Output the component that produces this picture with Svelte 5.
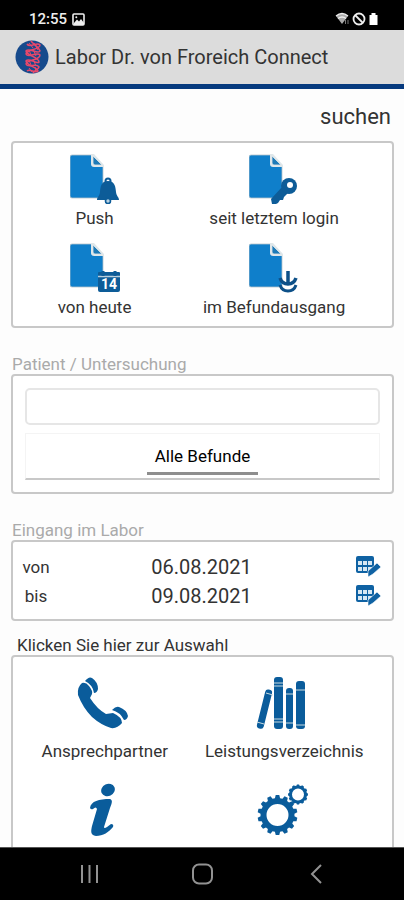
<!--
  Search screen of the lab results app
  Status bar, app header, search panels and the system navigation bar
-->
<script lang="ts">
  const filters = [
    { id: 'push', label: 'Push' },
    { id: 'login', label: 'seit letztem login' },
    { id: 'today', label: 'von heute' },
    { id: 'outbox', label: 'im Befundausgang' },
  ];

  const dates = $state([
    { id: 'from', label: 'von', value: '06.08.2021' },
    { id: 'to', label: 'bis', value: '09.08.2021' },
  ]);

  // Links without a label show only their icon
  const links = [
    { id: 'phone', label: 'Ansprechpartner' },
    { id: 'books', label: 'Leistungsverzeichnis' },
    { id: 'info', label: '' },
    { id: 'gears', label: '' },
  ];

  let query = $state('');

  /**
   * Outline of a gear wheel with a round hole
   */
  function gear(cx: number, cy: number, outer: number, root: number, hole: number, teeth: number): string {
    const points: string[] = [];
    const step = (Math.PI * 2) / teeth;
    const corners = [[-0.34, root], [-0.2, outer], [0.2, outer], [0.34, root]];
    for (let i = 0; i < teeth; i++) {
      for (const [offset, radius] of corners) {
        const angle = (i + offset) * step - Math.PI / 2;
        points.push(`${(cx + radius * Math.cos(angle)).toFixed(2)} ${(cy + radius * Math.sin(angle)).toFixed(2)}`);
      }
    }
    return `M${points.join('L')}ZM${cx - hole} ${cy}a${hole} ${hole} 0 1 0 ${hole * 2} 0a${hole} ${hole} 0 1 0 ${-hole * 2} 0Z`;
  }
</script>

<div class="screen">
  <div class="status-bar">
    <span class="clock">12:55</span>
    <svg width="13" height="13" viewBox="0 0 13 13" aria-hidden="true">
      <rect x="1" y="1" width="11" height="11" rx="1" fill="none" stroke="#eee" stroke-width="1.6" />
      <path d="M2 10 5 6.500l2 2L9 6l3 4v2H2z" fill="#eee" />
      <circle cx="4.300" cy="4.200" r="1" fill="#eee" />
    </svg>
    <svg class="signals" width="44" height="14" viewBox="0 0 44 14" aria-hidden="true">
      <path d="M1 4Q7 -1 13 4L7 12z" fill="#aaa" />
      <path d="M1 4Q7 -1 13 4M3 6.500Q7 3.500 11 6.500" fill="none" stroke="#eee" stroke-width="1.400" />
      <path d="M10.500 12V8M13 8v4" stroke="#777" />
      <circle cx="24" cy="7" r="5.500" fill="none" stroke="#eee" stroke-width="1.800" />
      <path d="m20 3 8 8" stroke="#eee" stroke-width="1.800" />
      <path d="M34.500 3h2V1h4v2h2v10h-8z" fill="#fff" />
    </svg>
  </div>

  <header class="app-header">
    <svg width="34" height="34" viewBox="0 0 34 34" aria-hidden="true">
      <circle cx="17" cy="17" r="16.500" fill="#164a8c" />
      <g fill="none" stroke="#e8486a" stroke-width="1.500">
        <path d="M12 4C15 9 22 1 25 5C25 10 12 9 11 14C13 19 22 11 25 15C25 21 12 19 11 24C13 29 21 22 24 27C23 30 20 30 18 33" />
        <path d="M16 1C18 4 24 7 25 11C23 15 14 7 11 11C12 16 24 17 24 22C22 25 14 17 11 21C12 26 22 27 23 31C20 34 15 28 12 31" />
        <path d="m14 3 4 5M19 3l4 7M14 10l2 5M18 9l3 7M14 20l2 5M18 19l3 7M14 28l3 4M20 27l1 4" stroke-width="1" />
      </g>
    </svg>
    <h1>Labor Dr. von Froreich Connect</h1>
  </header>

  <main>
    <button class="search" type="button">suchen</button>

    <section class="panel filters" aria-label="Filter">
      {#each filters as filter (filter.id)}
        <button class="tile" type="button">
          <svg width="50" height="50" viewBox="0 0 50 50" aria-hidden="true">
            <path d="M2 1H23L33 12V43Q33 44 32 44H2Q0 44 0 42V3Q0 1 2 1Z" fill="#0f7fcb" stroke="#b5c3ca" stroke-width="0.800" />
            <path d="M21 0 34 0V13H24Q21 13 21 10Z" fill="#dfe7ea" />
            <path d="M24 0 34 0V11Z" fill="#fff" />
            <path d="M23 2V9Q23 11 25 11H32Z" fill="#1e7bb8" stroke="#dfe7ea" stroke-width="0.800" />
            {#if filter.id === 'push'}
              <circle cx="38" cy="27" r="2.500" fill="none" stroke="#0d5c98" stroke-width="2" />
              <path d="M38 27C31 27 30.500 33 30 38C29.700 42 27 43 27 46H49C49 43 46.300 42 46 38C45.500 33 45 27 38 27Z" fill="#0d5c98" />
              <circle cx="38" cy="47" r="2.500" fill="#b9d2e2" stroke="#0d5c98" stroke-width="1.600" />
            {:else if filter.id === 'login'}
              <path d="m33 33 6 6-4 4-1 3-3 0-2 3-2 1-4 0-1-5z" fill="#0d5c98" />
              <circle cx="40" cy="32" r="8" fill="#0d5c98" />
              <circle cx="41" cy="31" r="3" fill="#fff" />
            {:else if filter.id === 'today'}
              <path d="M28 30Q28 29 29 29H49Q50 29 50 30V47Q50 49 48 49H30Q28 49 28 47Z" fill="#0d5c98" />
              <path d="M28 33.500H50" stroke="#b9cfdd" stroke-width="1.500" />
              <path d="M33 28v5M45 28v5" stroke="#0d5c98" stroke-width="3" />
              <text x="39" y="46" text-anchor="middle">14</text>
            {:else}
              <path d="M39 28V41M31 35Q33 41 39 41Q45 41 47 35" fill="none" stroke="#0d5088" stroke-width="3.500" />
              <path d="M31 42Q33 48 39 48Q45 48 47 42" fill="none" stroke="#0d5088" stroke-width="3" />
            {/if}
          </svg>
          <span>{filter.label}</span>
        </button>
      {/each}
    </section>

    <label class="caption" for="query">Patient / Untersuchung</label>
    <section class="panel patient">
      <input id="query" type="text" bind:value={query} />
      <div class="tabs">
        <button class="tab" type="button">Alle Befunde</button>
      </div>
    </section>

    <h2 class="caption">Eingang im Labor</h2>
    <section class="panel dates">
      {#each dates as date (date.id)}
        <div class="date-row">
          <label for={date.id}>{date.label}</label>
          <input id={date.id} type="text" bind:value={date.value} />
          <button type="button" aria-label="Datum {date.label} wählen">
            <svg width="26" height="22" viewBox="0 0 26 22" aria-hidden="true">
              <rect x="1" y="0" width="18" height="17" rx="2" fill="#0f62a3" />
              <path d="M3 5h4v4H3zM8 5h4v4H8zM13 5h4v4h-4zM3 11h4v4H3zM8 11h4v4H8zM13 11h4v4h-4z" fill="#d8e8f3" />
              <path d="m22 7 4 4-8 7-5 3 0-6z" fill="#0f62a3" stroke="#fff" stroke-width="0.600" />
            </svg>
          </button>
        </div>
      {/each}
    </section>

    <h2 class="caption selection">Klicken Sie hier zur Auswahl</h2>
    <nav class="panel links">
      {#each links as link (link.id)}
        <a class="tile" href="#{link.id}" aria-label={link.label || link.id}>
          <svg width="56" height="56" viewBox="0 0 56 56" fill="#0a5c9b" aria-hidden="true">
            {#if link.id === 'phone'}
              <path d="M5 8Q9 7 12 11Q16 16 15 19L13 23Q20 34 29 39L36 38Q45 42 45 48Q40 54 34 53Q24 50 15 42Q6 33 1 20Q0 12 5 8Z" />
              <path d="M8 6Q12 1 15 3Q21 7 21 14Q20 18 17 18Q16 10 8 6Z" />
              <path d="M35 35Q39 31 42 32Q50 35 51 41Q50 45 47 45Q43 37 35 35Z" />
            {:else if link.id === 'books'}
              <rect x="18" y="2" width="9" height="52" rx="3" />
              <rect x="30" y="13" width="7" height="41" rx="3" />
              <rect x="40" y="6" width="9" height="48" rx="3" />
              <rect x="5" y="14" width="7" height="40" rx="3" transform="rotate(14 8 34)" />
              <path d="M18 8h9M18 11h9M18 44h9M18 47h9M30 19h7M30 48h7M40 15h9M40 50h9M10 18l7 2M1 47l7 2" stroke="#c9dbe0" />
            {:else if link.id === 'info'}
              <ellipse cx="31" cy="8" rx="7" ry="6" transform="rotate(-25 31 8)" />
              <path d="M13 26C14 19 22 17 33 17C36 18 35 21 33 26L27 45Q27 47 30 45L34 42Q37 42 36 45C32 50 26 54 19 54C13 53 14 49 15 44L20 27Q19 24 16 27Q14 28 13 26Z" />
            {:else}
              <path d={gear(21.5, 33, 20, 17, 11, 14)} fill-rule="evenodd" />
              <path d={gear(42, 12.5, 10, 9, 6, 12)} fill-rule="evenodd" />
            {/if}
          </svg>
          {#if link.label}
            <span>{link.label}</span>
          {/if}
        </a>
      {/each}
    </nav>
  </main>

  <footer class="system-nav">
    <button type="button" aria-label="Letzte Apps">
      <svg width="22" height="22" viewBox="0 0 22 22" aria-hidden="true">
        <path d="M4 2v18M11.500 2v18M19 2v18" />
      </svg>
    </button>
    <button type="button" aria-label="Startseite">
      <svg width="22" height="22" viewBox="0 0 22 22" aria-hidden="true">
        <rect x="2" y="1.500" width="19" height="19" rx="6" />
      </svg>
    </button>
    <button type="button" aria-label="Zurück">
      <svg width="22" height="22" viewBox="0 0 22 22" aria-hidden="true">
        <path d="M17 2 8 11l9 9" />
      </svg>
    </button>
  </footer>
</div>

<style>
  :global(body) {
    margin: 0;
    background: #fdfdfd;
  }

  .screen {
    display: flex;
    flex-direction: column;
    height: 100vh;
    font-family: Roboto, 'Liberation Sans', sans-serif;
    font-size: 17px;
    color: #333;
  }

  button,
  input {
    padding: 0;
    border: 0;
    background: none;
    font: inherit;
    color: inherit;
    box-sizing: border-box;
  }

  button {
    cursor: pointer;
  }

  svg {
    display: block;
    flex: none;
  }

  h1,
  h2 {
    margin: 0;
    font-weight: 400;
  }

  .status-bar {
    display: flex;
    flex: none;
    align-items: center;
    gap: 5px;
    height: 30px;
    padding: 8px 25px 0 29px;
    box-sizing: border-box;
    background: #000;
    color: #eee;
  }

  .clock {
    font-size: 15px;
    font-weight: 500;
  }

  .signals {
    margin-left: auto;
  }

  .app-header {
    display: flex;
    flex: none;
    align-items: center;
    gap: 6px;
    height: 54px;
    padding: 0 15px;
    background: #dcdcdc;
    border-bottom: 5px solid #063a7e;
  }

  h1 {
    font-size: 20px;
    white-space: nowrap;
  }

  main {
    display: flex;
    flex: 1;
    flex-direction: column;
    min-height: 0;
    padding: 14px 10px 0 11px;
    overflow-y: auto;
    scrollbar-width: none;
  }

  main > * {
    flex: none;
  }

  .search {
    align-self: flex-end;
    margin: 0 3px 10px 0;
    font-size: 22px;
    line-height: 28px;
  }

  .panel {
    border: 2px solid #c8c8c8;
    border-radius: 4px;
    background: #fff;
  }

  .tile {
    display: flex;
    flex-direction: column;
    align-items: center;
    line-height: 20px;
    color: #333;
    text-decoration: none;
    white-space: nowrap;
  }

  .filters {
    display: grid;
    grid-template-columns: 5fr 6fr;
    row-gap: 15px;
    padding: 11px 20px 9px 0;
    margin-bottom: 26px;
  }

  .filters .tile {
    gap: 4px;
  }

  .filters text {
    font-size: 14px;
    font-weight: 700;
    fill: #fff;
  }

  .caption {
    padding-left: 1px;
    font-size: 17px;
    line-height: 20px;
    color: #aaa;
  }

  .patient {
    display: flex;
    flex-direction: column;
    gap: 8px;
    padding: 12px;
    margin-bottom: 26px;
  }

  .patient input {
    height: 37px;
    padding: 0 8px;
    border: 2px solid #e6e6e6;
    border-radius: 5px;
  }

  .tabs {
    display: flex;
    justify-content: center;
    height: 47px;
    padding-bottom: 3px;
    box-sizing: border-box;
    border: 1px solid #f4f4f4;
    border-bottom: 2px solid #c8c8c8;
  }

  .tab {
    padding: 6px 8px 0;
    border-bottom: 3px solid #8e8e8e;
    color: #000;
  }

  .dates {
    padding: 10px 0 9px;
    margin-bottom: 14px;
  }

  .date-row {
    display: grid;
    grid-template-columns: 46px 1fr 48px;
    align-items: center;
    height: 29px;
    text-align: center;
  }

  .date-row input {
    min-width: 0;
    font-size: 20px;
    text-align: center;
  }

  .date-row button {
    justify-self: center;
  }

  .selection {
    padding-left: 6px;
    color: #333;
  }

  .links {
    display: grid;
    grid-template-columns: 1fr 1fr;
    row-gap: 21px;
    padding: 18px 18px 16px 2px;
  }

  .links .tile {
    gap: 10px;
  }

  .system-nav {
    display: grid;
    flex: none;
    grid-template-columns: repeat(3, 1fr);
    height: 52px;
    padding: 0 32px;
    border-top: 1px solid #555;
    background: #000;
  }

  .system-nav button {
    display: grid;
    place-items: center;
  }

  .system-nav path,
  .system-nav rect {
    fill: none;
    stroke: #929292;
    stroke-width: 2;
  }
</style>
